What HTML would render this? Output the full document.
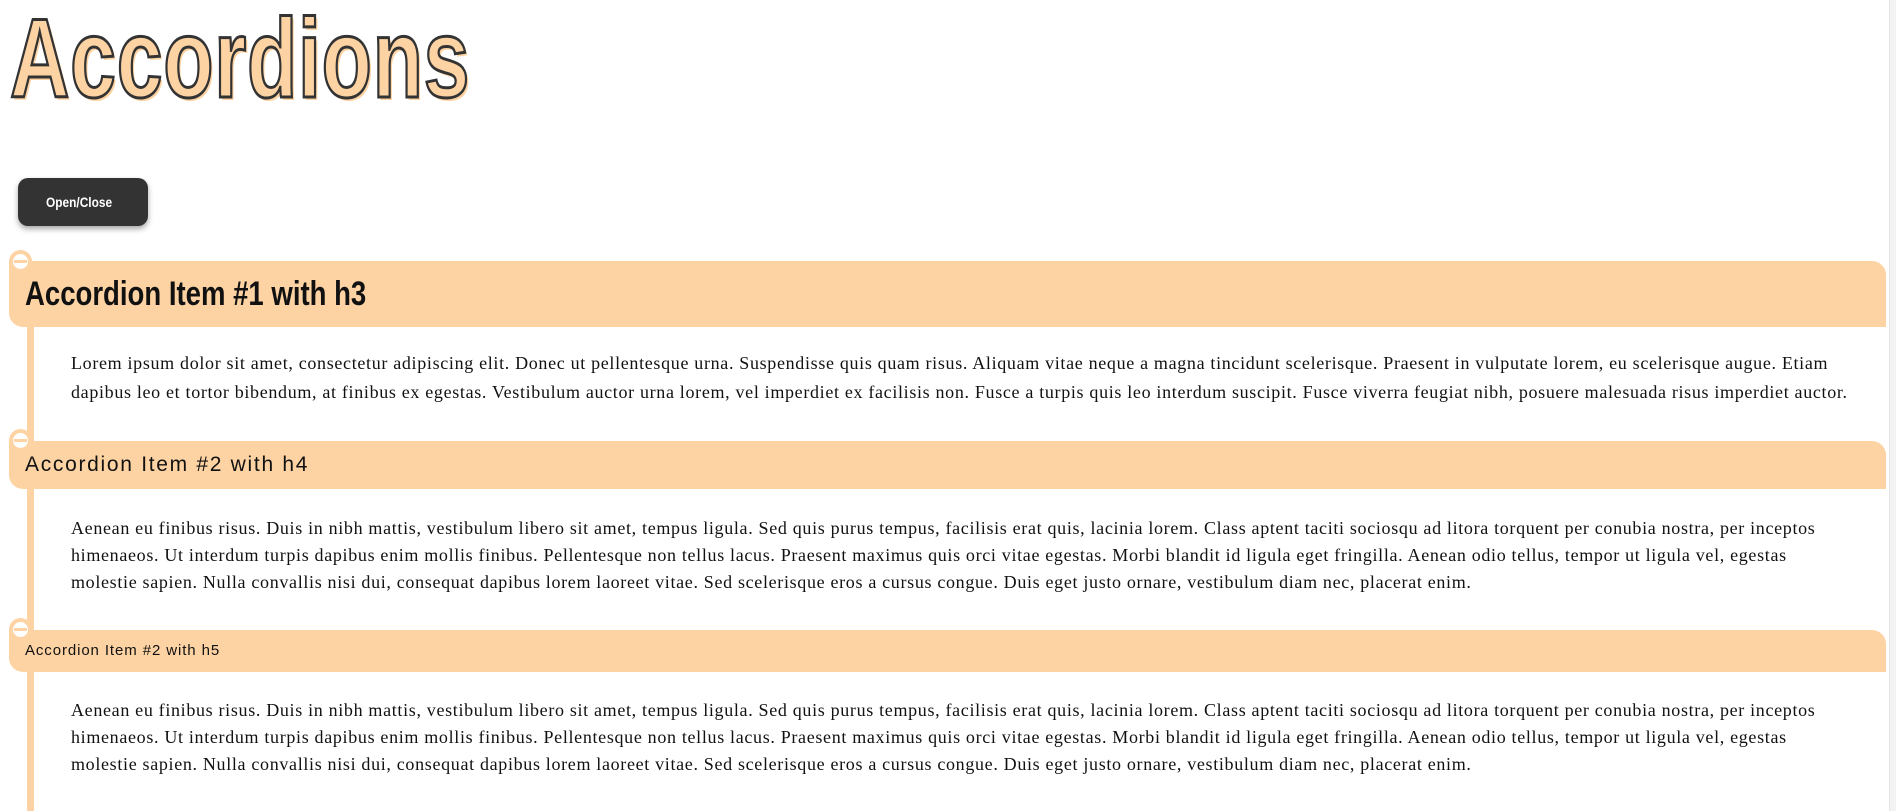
<!DOCTYPE html>
<html><head><meta charset="utf-8"><style>
*{margin:0;padding:0;box-sizing:border-box}
html,body{width:1896px;height:811px;overflow:hidden;background:#fff}
body{position:relative;font-family:"Liberation Sans",sans-serif}
.title{position:absolute;left:10px;top:-6px;font-family:"Liberation Sans",sans-serif;font-weight:bold;font-size:112px;color:#fed3a3;-webkit-text-stroke:3px #333;text-shadow:3px 3px 0 #fed3a3;letter-spacing:1px;transform:scaleX(0.735);transform-origin:left;white-space:nowrap}
.btn{position:absolute;left:18px;top:178px;width:130px;height:48px;background:#333;border-radius:10px;box-shadow:0 3px 6px rgba(0,0,0,.35);color:#fff;font-weight:bold;font-size:14px;line-height:48px}
.btn span{position:absolute;left:28px;transform:scaleX(.85);transform-origin:left}
.line{position:absolute;left:27px;top:262px;width:7px;height:560px;background:#fed3a3}
.hd{position:absolute;left:9px;width:1877px;background:#fed3a3;border-radius:0 14px 0 14px}
.hd span{position:absolute;left:16px;color:#111;white-space:nowrap}
.c{position:absolute;left:9px;width:23px;height:23px;border-radius:50%;background:#fed3a3}
.c::before{content:"";position:absolute;left:4px;top:4px;width:15px;height:15px;border-radius:50%;background:#fff}
.c::after{content:"";position:absolute;left:5px;top:10px;width:13px;height:2.5px;background:#fed3a3}
.p{position:absolute;left:71px;font-family:"Liberation Serif",serif;font-size:18px;line-height:27px;color:#111;white-space:nowrap;letter-spacing:0.67px}
.sb{position:absolute;right:0;top:0;width:7px;height:811px;background:#f3f3f3;border-left:1px solid #e4e4e4}
</style></head><body>
<div class="title">Accordions</div>
<div class="btn"><span>Open/Close</span></div>
<div class="line"></div>

<div class="hd" style="top:261px;height:66px"><span style="top:14px;font-weight:bold;font-size:34px;transform:scaleX(.81);transform-origin:left">Accordion Item #1 with h3</span></div>
<div class="c" style="top:250px"></div>
<div class="p" style="top:349px;line-height:29px">Lorem ipsum dolor sit amet, consectetur adipiscing elit. Donec ut pellentesque urna. Suspendisse quis quam risus. Aliquam vitae neque a magna tincidunt scelerisque. Praesent in vulputate lorem, eu scelerisque augue. Etiam<br>dapibus leo et tortor bibendum, at finibus ex egestas. Vestibulum auctor urna lorem, vel imperdiet ex facilisis non. Fusce a turpis quis leo interdum suscipit. Fusce viverra feugiat nibh, posuere malesuada risus imperdiet auctor.</div>

<div class="hd" style="top:441px;height:48px"><span style="top:12px;font-size:21px;letter-spacing:1.7px">Accordion Item #2 with h4</span></div>
<div class="c" style="top:429px"></div>
<div class="p" style="top:515px">Aenean eu finibus risus. Duis in nibh mattis, vestibulum libero sit amet, tempus ligula. Sed quis purus tempus, facilisis erat quis, lacinia lorem. Class aptent taciti sociosqu ad litora torquent per conubia nostra, per inceptos<br>himenaeos. Ut interdum turpis dapibus enim mollis finibus. Pellentesque non tellus lacus. Praesent maximus quis orci vitae egestas. Morbi blandit id ligula eget fringilla. Aenean odio tellus, tempor ut ligula vel, egestas<br>molestie sapien. Nulla convallis nisi dui, consequat dapibus lorem laoreet vitae. Sed scelerisque eros a cursus congue. Duis eget justo ornare, vestibulum diam nec, placerat enim.</div>

<div class="hd" style="top:630px;height:42px"><span style="top:12px;font-size:15px;letter-spacing:0.9px">Accordion Item #2 with h5</span></div>
<div class="c" style="top:618px"></div>
<div class="p" style="top:697px">Aenean eu finibus risus. Duis in nibh mattis, vestibulum libero sit amet, tempus ligula. Sed quis purus tempus, facilisis erat quis, lacinia lorem. Class aptent taciti sociosqu ad litora torquent per conubia nostra, per inceptos<br>himenaeos. Ut interdum turpis dapibus enim mollis finibus. Pellentesque non tellus lacus. Praesent maximus quis orci vitae egestas. Morbi blandit id ligula eget fringilla. Aenean odio tellus, tempor ut ligula vel, egestas<br>molestie sapien. Nulla convallis nisi dui, consequat dapibus lorem laoreet vitae. Sed scelerisque eros a cursus congue. Duis eget justo ornare, vestibulum diam nec, placerat enim.</div>
<div class="sb"></div>
</body></html>
